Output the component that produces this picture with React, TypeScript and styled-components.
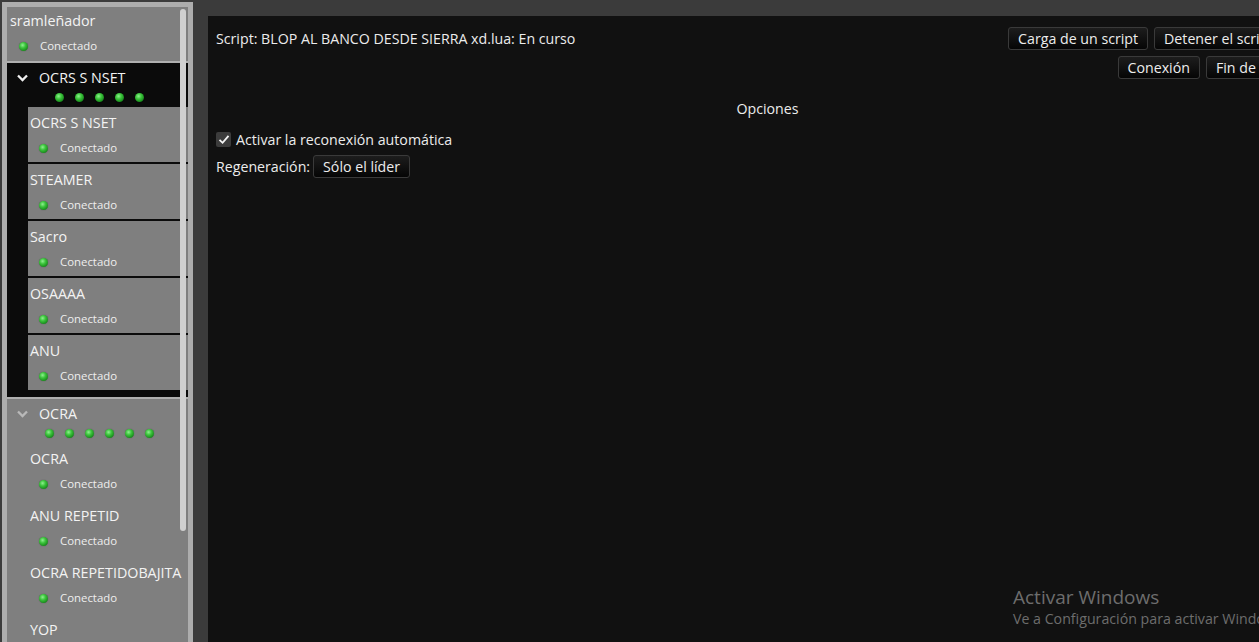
import React from 'react';
import styled, { createGlobalStyle } from 'styled-components';

type Client = { name: string; status: string };
type Team = { leader: string; selected: boolean; members: Client[] };

const solo: Client = { name: 'sramleñador', status: 'Conectado' };

const teams: Team[] = [
  {
    leader: 'OCRS S NSET',
    selected: true,
    members: [
      { name: 'OCRS S NSET', status: 'Conectado' },
      { name: 'STEAMER', status: 'Conectado' },
      { name: 'Sacro', status: 'Conectado' },
      { name: 'OSAAAA', status: 'Conectado' },
      { name: 'ANU', status: 'Conectado' },
    ],
  },
  {
    leader: 'OCRA',
    selected: false,
    members: [
      { name: 'OCRA', status: 'Conectado' },
      { name: 'ANU REPETID', status: 'Conectado' },
      { name: 'OCRA REPETIDOBAJITA', status: 'Conectado' },
      { name: 'YOP', status: 'Conectado' },
      { name: 'OCRA 2', status: 'Conectado' },
      { name: 'OCRA 3', status: 'Conectado' },
    ],
  },
];

const GlobalStyle = createGlobalStyle`
  html, body {
    margin: 0;
    padding: 0;
    background: #3b3b3b;
    overflow: hidden;
  }

  body {
    font-family: "Open Sans", "Noto Sans", sans-serif;
    color: #ececec;
  }
`;

const Window = styled.div`
  position: relative;
  display: flex;
  align-items: flex-start;
  height: 100vh;
  overflow: hidden;
`;

/* ---------- lista de cuentas ---------- */

const Sidebar = styled.aside`
  position: relative;
  flex: none;
  width: 181px;
  height: calc(100vh - 7px);
  margin: 2px 0 0 2px;
  border: 5px solid #adadad;
  border-bottom: none;
  background: #7f7f7f;
  overflow: hidden;
`;

const ScrollThumb = styled.div`
  position: absolute;
  top: 2px;
  right: 2px;
  width: 6px;
  height: 522px;
  border-radius: 3px;
  background: #d0d0d0;
`;

const Entry = styled.div`
  border-bottom: 2px solid #b0b0b0;
`;

const ClientCard = styled.div<{ $top?: boolean }>`
  background: #7f7f7f;
  padding: ${(p) => (p.$top ? '4px 0 7px 3px' : '6px 0 6px 2px')};
`;

const ClientName = styled.div`
  font-size: 14.3px;
  line-height: 20px;
  color: #f3f3f3;
  white-space: nowrap;
`;

const StatusRow = styled.div`
  display: flex;
  align-items: center;
  gap: 12px;
  height: 16px;
  margin-top: 7px;
  padding-left: 9px;
`;

const Led = styled.span`
  flex: none;
  width: 9px;
  height: 9px;
  border-radius: 50%;
  background: radial-gradient(circle at 40% 35%, #8ff08f 0%, #3cc43c 35%, #16891a 75%, #0d5a10 100%);
  box-shadow: 0 0 1px rgba(0, 0, 0, 0.5);
`;

const StatusText = styled.span`
  font-size: 11.4px;
  line-height: 16px;
  color: #eeeeee;
`;

const Group = styled.div<{ $selected: boolean }>`
  background: ${(p) => (p.$selected ? '#0b0b0b' : '#7f7f7f')};
  padding: 5px 0 7px;
`;

const GroupHeader = styled.div<{ $selected: boolean }>`
  display: flex;
  align-items: center;
  gap: 11px;
  height: 20px;
  padding-left: 10px;
  color: ${(p) => (p.$selected ? '#f0f0f0' : '#b9b9b9')};
`;

const GroupTitle = styled.span`
  font-size: 14.3px;
  line-height: 20px;
  color: #f3f3f3;
`;

const LedRow = styled.div`
  display: flex;
  justify-content: center;
  align-items: center;
  gap: 11px;
  height: 10px;
  margin-top: 4px;
  padding-left: 3px;
`;

const Members = styled.div`
  display: flex;
  flex-direction: column;
  gap: 2px;
  margin: 5px 0 0 21px;
`;

/* ---------- panel principal ---------- */

const Main = styled.main`
  flex: none;
  width: 1119px;
  height: calc(100vh - 16px);
  margin: 16px 0 0 15px;
  background: #111111;
  font-size: 14.2px;
`;

const Header = styled.div`
  display: flex;
  justify-content: space-between;
  align-items: flex-start;
  padding: 11px 0 0 8px;
`;

const ScriptLabel = styled.div`
  line-height: 23px;
  white-space: nowrap;
`;

const Toolbar = styled.div`
  display: flex;
  flex-direction: column;
  align-items: flex-end;
  gap: 6px;
`;

const ToolRow = styled.div`
  display: flex;
  gap: 6px;
`;

const Button = styled.button`
  height: 23px;
  padding: 0 9px;
  border: 1px solid #3a3a3a;
  border-radius: 3px;
  background: linear-gradient(#1d1d1d, #050505);
  color: #ededed;
  font-family: inherit;
  font-size: 14.2px;
  line-height: 21px;
  white-space: nowrap;
`;

const SectionTitle = styled.div`
  margin-top: 20px;
  text-align: center;
  line-height: 20px;
`;

const OptionRow = styled.label`
  display: flex;
  align-items: center;
  gap: 5px;
  height: 20px;
  margin-top: 10px;
  padding-left: 8px;
`;

const CheckBox = styled.span`
  display: flex;
  align-items: center;
  justify-content: center;
  width: 15px;
  height: 15px;
  border-radius: 2px;
  background: #3c3c3c;
`;

const FieldRow = styled.div`
  display: flex;
  align-items: center;
  gap: 3px;
  margin-top: 6px;
  padding-left: 8px;
`;

const Watermark = styled.div`
  position: absolute;
  left: 1013px;
  top: 584px;
  color: #6d6d6d;
  white-space: nowrap;
  pointer-events: none;
`;

const WatermarkTitle = styled.div`
  font-size: 19px;
  line-height: 26px;
`;

const WatermarkText = styled.div`
  font-size: 14.2px;
  line-height: 18px;
`;

const Chevron = () => (
  <svg width="11" height="8" viewBox="0 0 11 8">
    <polyline points="1,1.5 5.5,6 10,1.5" fill="none" stroke="currentColor" strokeWidth="2.3" />
  </svg>
);

const Check = () => (
  <svg width="12" height="11" viewBox="0 0 12 11">
    <polyline points="1.5,5.8 4.6,8.8 10.5,1.8" fill="none" stroke="#f5f5f5" strokeWidth="1.8" />
  </svg>
);

const ClientItem = ({ client, top }: { client: Client; top?: boolean }) => (
  <ClientCard $top={top}>
    <ClientName>{client.name}</ClientName>
    <StatusRow>
      <Led />
      <StatusText>{client.status}</StatusText>
    </StatusRow>
  </ClientCard>
);

const App = () => (
  <Window>
    <GlobalStyle />
    <Sidebar>
      <Entry>
        <ClientItem client={solo} top />
      </Entry>
      {teams.map((team) => (
        <Entry key={team.leader}>
          <Group $selected={team.selected}>
            <GroupHeader $selected={team.selected}>
              <Chevron />
              <GroupTitle>{team.leader}</GroupTitle>
            </GroupHeader>
            <LedRow>
              {team.members.map((m) => (
                <Led key={m.name} />
              ))}
            </LedRow>
            <Members>
              {team.members.map((m) => (
                <ClientItem key={m.name} client={m} />
              ))}
            </Members>
          </Group>
        </Entry>
      ))}
      <ScrollThumb />
    </Sidebar>

    <Main>
      <Header>
        <ScriptLabel>Script: BLOP AL BANCO DESDE SIERRA xd.lua: En curso</ScriptLabel>
        <Toolbar>
          <ToolRow>
            <Button>Carga de un script</Button>
            <Button>Detener el script actual</Button>
          </ToolRow>
          <ToolRow>
            <Button>Conexión</Button>
            <Button>Fin de la sesión</Button>
          </ToolRow>
        </Toolbar>
      </Header>
      <SectionTitle>Opciones</SectionTitle>
      <OptionRow>
        <CheckBox>
          <Check />
        </CheckBox>
        Activar la reconexión automática
      </OptionRow>
      <FieldRow>
        Regeneración:
        <Button>Sólo el líder</Button>
      </FieldRow>
    </Main>

    <Watermark>
      <WatermarkTitle>Activar Windows</WatermarkTitle>
      <WatermarkText>Ve a Configuración para activar Windows.</WatermarkText>
    </Watermark>
  </Window>
);

export default App;
